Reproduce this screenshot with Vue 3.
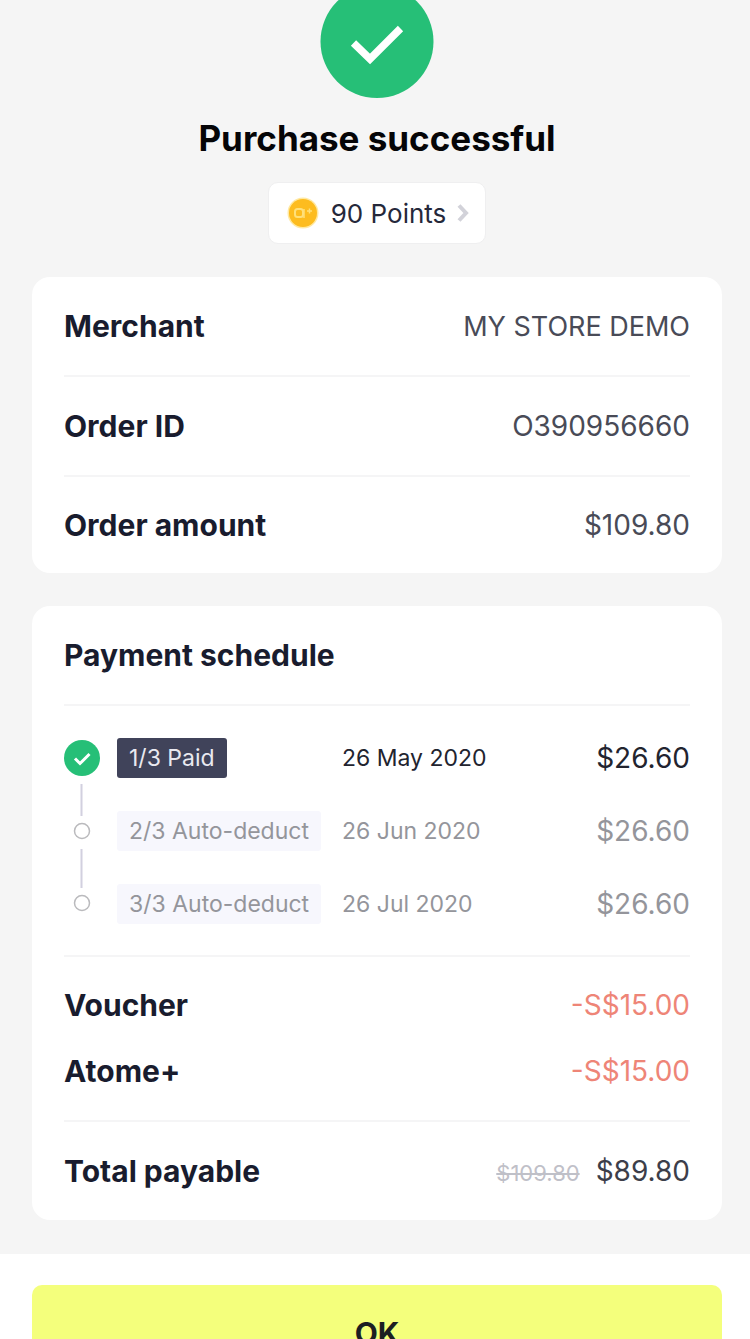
<script setup>
const order = [
  { label: 'Merchant', value: 'MY STORE DEMO', name: true },
  { label: 'Order ID', value: 'O390956660' },
  { label: 'Order amount', value: '$109.80' },
]

const payments = [
  { tag: '1/3 Paid', date: '26 May 2020', amount: '$26.60', paid: true },
  { tag: '2/3 Auto-deduct', date: '26 Jun 2020', amount: '$26.60', paid: false },
  { tag: '3/3 Auto-deduct', date: '26 Jul 2020', amount: '$26.60', paid: false },
]

const discounts = [
  { label: 'Voucher', value: '-S$15.00' },
  { label: 'Atome+', value: '-S$15.00' },
]
</script>

<template>
  <div class="page">
    <main class="content">
      <header class="hero">
        <svg class="hero-icon" viewBox="0 15 114 98" aria-hidden="true">
          <circle cx="57" cy="56.5" r="56.5" fill="#26bf77" />
          <path d="M33.5 58 L50 74 L80.5 43.5" fill="none" stroke="#fff" stroke-width="7.5" />
        </svg>
        <h1>Purchase successful</h1>
        <button type="button" class="points">
          <svg class="coin" viewBox="0 0 32 32" aria-hidden="true">
            <circle cx="16" cy="16" r="15.5" fill="#ffe9a3" />
            <circle cx="16" cy="16" r="14" fill="#fdbc1f" />
            <rect x="8" y="12" width="8" height="8" rx="2.5" fill="none" stroke="#ffe07a" stroke-width="2" />
            <path d="M17 12 V21 M20 14 H25 M22.5 11.5 V16.5" fill="none" stroke="#ffe07a" stroke-width="1.5" />
          </svg>
          <span>90 Points</span>
          <svg class="chevron" viewBox="0 0 12 20" aria-hidden="true">
            <path d="M2 2.5 L9 10 L2 17.5" fill="none" stroke="#d2d2d9" stroke-width="4" />
          </svg>
        </button>
      </header>

      <section class="card">
        <dl>
          <div v-for="item in order" :key="item.label" class="row">
            <dt>{{ item.label }}</dt>
            <dd :class="{ name: item.name }">{{ item.value }}</dd>
          </div>
        </dl>
      </section>

      <section class="card">
        <div class="row">
          <h2>Payment schedule</h2>
        </div>

        <div class="schedule">
          <svg class="track" viewBox="0 0 36 186" aria-hidden="true">
            <circle cx="18" cy="20" r="18" fill="#26bf77" />
            <path d="M11 20.5 L16 25.5 L25.5 16" fill="none" stroke="#fff" stroke-width="3" />
            <path d="M17.5 46 V78 M17.5 111 V150" stroke="#d2d0df" stroke-width="2" />
            <circle cx="18" cy="93" r="7.5" fill="#fff" stroke="#bababd" stroke-width="1.5" />
            <circle cx="18" cy="165" r="7.5" fill="#fff" stroke="#bababd" stroke-width="1.5" />
          </svg>
          <ol>
            <li v-for="p in payments" :key="p.tag" :class="{ paid: p.paid }">
              <span class="tag">{{ p.tag }}</span>
              <span class="date">{{ p.date }}</span>
              <span class="amount">{{ p.amount }}</span>
            </li>
          </ol>
        </div>

        <dl class="discounts">
          <div v-for="item in discounts" :key="item.label" class="line">
            <dt>{{ item.label }}</dt>
            <dd class="minus">{{ item.value }}</dd>
          </div>
        </dl>

        <dl>
          <div class="row total">
            <dt>Total payable</dt>
            <dd><s>$109.80</s>$89.80</dd>
          </div>
        </dl>
      </section>
    </main>

    <footer class="actions">
      <button type="button" class="ok">OK</button>
    </footer>
  </div>
</template>

<style>
body {
  margin: 0;
  background: #f5f5f5;
}
</style>

<style scoped>
.page {
  height: 100vh;
  overflow: hidden;
  background: #f5f5f5;
  color: #191c2e;
  font-family: Inter, "Liberation Sans", sans-serif;
  font-size: 28px;
}

.content {
  padding: 0 28px 34px 32px;
}

.hero {
  display: flex;
  flex-direction: column;
  align-items: center;
  margin-bottom: 33px;
}

.hero-icon {
  display: block;
  width: 114px;
  height: 98px;
}

h1 {
  margin: 20px 0 24px;
  color: #050507;
  font-size: 35px;
  line-height: 40px;
  font-weight: 700;
}

.points {
  display: flex;
  align-items: center;
  height: 62px;
  padding: 0 16px 0 18px;
  border: 1px solid #efeff0;
  border-radius: 10px;
  background: #fff;
  color: #25283a;
  font-family: inherit;
  font-size: 26px;
}

.coin {
  width: 32px;
  height: 32px;
  margin-right: 12px;
}

.chevron {
  width: 12px;
  height: 20px;
  margin-left: 11px;
}

.card {
  padding: 0 32px;
  border-radius: 18px;
  background: #fff;
}

.card + .card {
  margin-top: 33px;
}

dl,
dd,
ol,
h2 {
  margin: 0;
  padding: 0;
}

.row,
.line {
  display: flex;
  align-items: center;
  justify-content: space-between;
}

.row {
  box-sizing: border-box;
  height: 100px;
  border-bottom: 2px solid #f5f5f6;
}

dl > .row:last-child {
  height: 96px;
  border-bottom: 0;
}

dl > .total:last-child {
  height: 98px;
}

dt,
h2 {
  font-size: 30px;
  font-weight: 700;
}

dd {
  color: #494b57;
}

.name {
  font-size: 27px;
}

.schedule {
  display: flex;
  gap: 17px;
  padding: 32px 0 31px;
  border-bottom: 2px solid #f5f5f6;
}

.track {
  flex: none;
  width: 36px;
  height: 186px;
}

ol {
  flex: 1;
  display: grid;
  gap: 33px;
  list-style: none;
}

li {
  display: grid;
  grid-template-columns: 203px 1fr auto;
  column-gap: 22px;
  align-items: center;
  height: 40px;
  color: #94959b;
}

.tag {
  justify-self: start;
  padding: 0 12px;
  border-radius: 3px;
  background: #f7f7fd;
  font-size: 23px;
  line-height: 40px;
  white-space: nowrap;
}

.date {
  font-size: 23px;
}

.paid {
  color: #22242f;
}

.paid .tag {
  background: #40435a;
  color: #e9e9f0;
}

.discounts {
  padding: 15px 0 16px;
  border-bottom: 2px solid #f5f5f6;
}

.line {
  height: 66px;
}

.minus {
  color: #ee8577;
}

s {
  margin-right: 16px;
  color: #bfc0c8;
  font-size: 22px;
}

.total dd {
  color: #3c3e4a;
}

.actions {
  padding: 31px 28px 31px 32px;
  background: #fff;
}

.ok {
  display: block;
  width: 100%;
  height: 96px;
  border: 0;
  border-radius: 10px;
  background: #f4ff7c;
  color: #1c1e22;
  font-family: inherit;
  font-size: 30px;
  font-weight: 700;
}
</style>
